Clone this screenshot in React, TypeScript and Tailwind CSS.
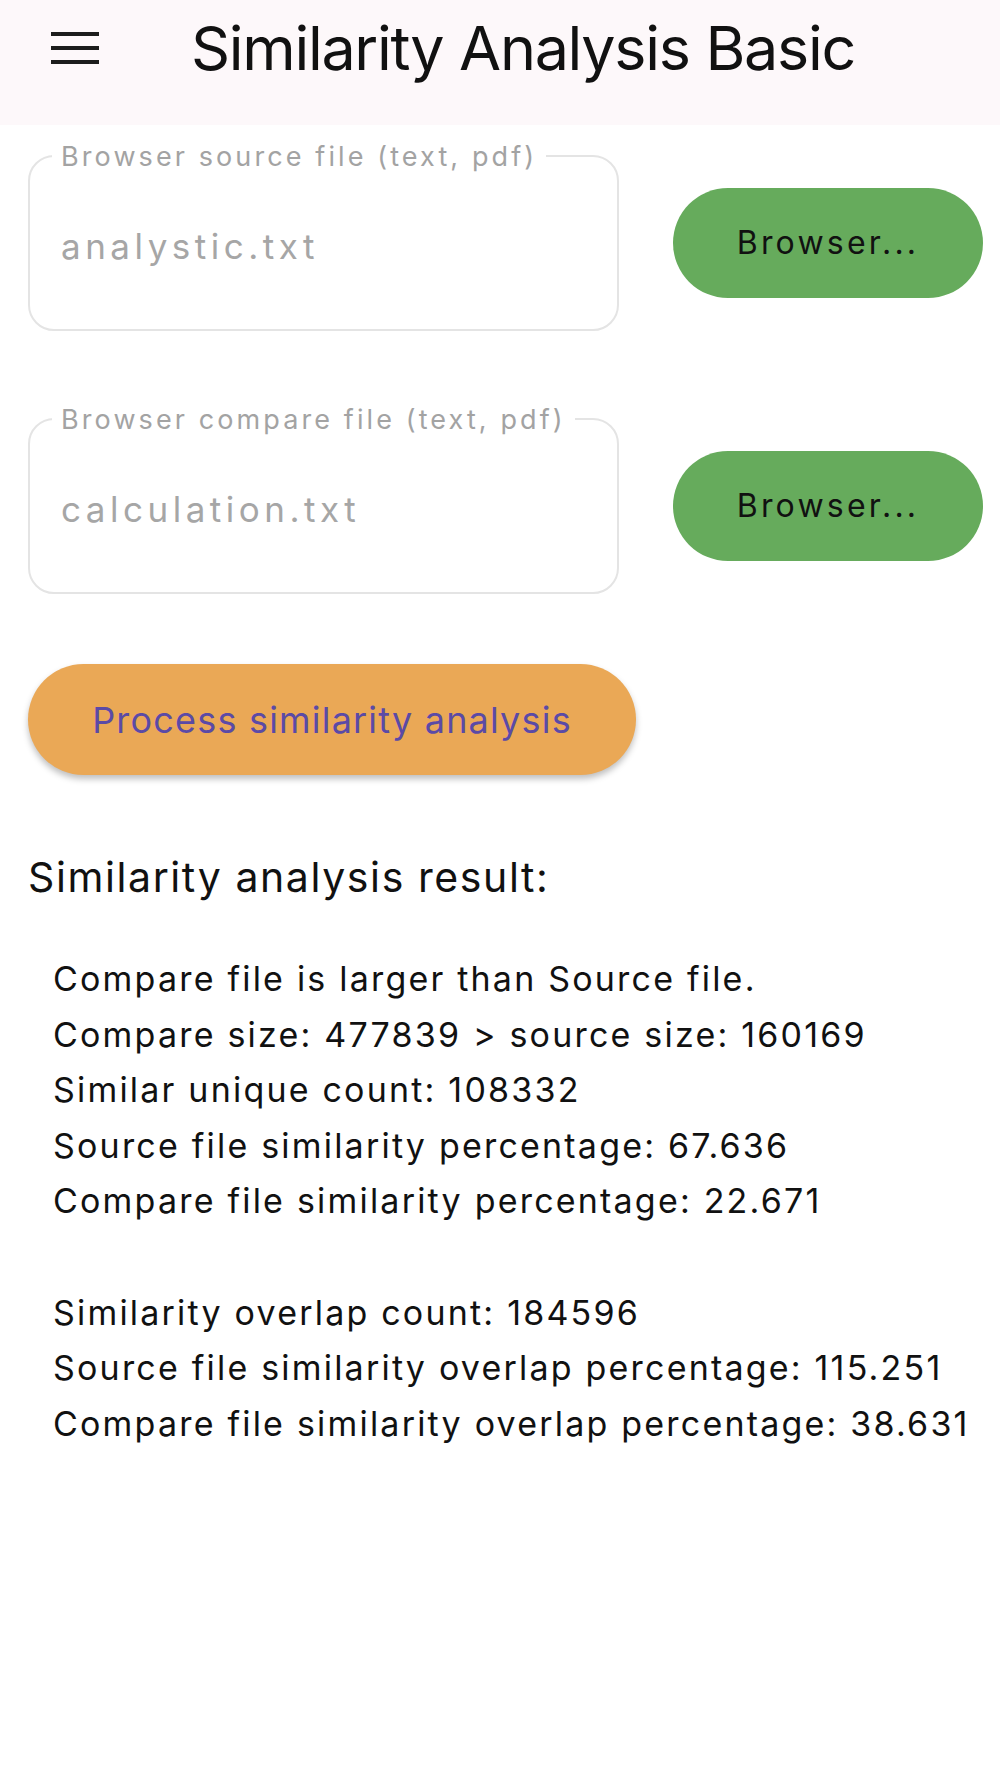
import React from 'react';

const font = { fontFamily: 'Inter, "Noto Sans", sans-serif' };

type FileFieldProps = {
  label: string;
  value: string;
};

function FileField({ label, value }: FileFieldProps) {
  return (
    <div className="relative flex h-[176px] w-[591px] items-center rounded-[26px] border-2 border-[#e4e4e4] bg-white pl-[31px] pt-[6px]">
      <span className="absolute left-[22px] top-0 -translate-y-1/2 bg-white px-[9px] text-[27px] leading-[32px] tracking-[3.1px] text-[#a3a3a3]">
        {label}
      </span>
      <span className="text-[35px] tracking-[4.5px] text-[#a6a6a6]">{value}</span>
    </div>
  );
}

function BrowseButton() {
  return (
    <button className="flex h-[110px] w-[310px] items-center justify-center rounded-full bg-[#66ab5c] text-[32px] tracking-[3.2px] text-[#111]">
      Browser...
    </button>
  );
}

const resultLines = [
  'Compare file is larger than Source file.',
  'Compare size: 477839 > source size: 160169',
  'Similar unique count: 108332',
  'Source file similarity percentage: 67.636',
  'Compare file similarity percentage: 22.671',
  '',
  'Similarity overlap count: 184596',
  'Source file similarity overlap percentage: 115.251',
  'Compare file similarity overlap percentage: 38.631',
];

export default function App() {
  return (
    <div className="min-h-[1778px] w-full bg-white text-[#111]" style={font}>
      {/* app bar */}
      <header className="h-[125px] bg-[#fdf8fa]">
        <div className="flex h-[96px] items-center">
          <svg className="ml-[51px] h-[32px] w-[48px]" viewBox="0 0 48 32" fill="#1c1c1c">
            <rect x="0" y="0" width="48" height="4" />
            <rect x="0" y="14" width="48" height="4" />
            <rect x="0" y="28" width="48" height="4" />
          </svg>
          <h1 className="ml-[92px] text-[61px] leading-none tracking-[-1.3px] text-[#111]">
            Similarity Analysis Basic
          </h1>
        </div>
      </header>

      <main className="pl-[28px] pr-[17px]">
        <div className="mt-[30px] flex items-center justify-between">
          <FileField label="Browser source file (text, pdf)" value="analystic.txt" />
          <BrowseButton />
        </div>
        <div className="mt-[87px] flex items-center justify-between">
          <FileField label="Browser compare file (text, pdf)" value="calculation.txt" />
          <BrowseButton />
        </div>

        <button className="mt-[70px] flex h-[111px] w-[608px] items-center justify-center rounded-full bg-[#eaa856] text-[36px] tracking-[1.2px] text-[#5b4aa6] shadow-[0_4px_6px_rgba(0,0,0,0.25)]">
          Process similarity analysis
        </button>

        <h2 className="mt-[78px] text-[41px] leading-[49px] tracking-[1.6px] text-[#111]">
          Similarity analysis result:
        </h2>

        <div className="mt-[49px] pl-[25px]">
          {resultLines.map((line, i) => (
            <p key={i} className="h-[55.6px] text-[34px] leading-[55.6px] tracking-[2.2px] text-[#111]">
              {line}
            </p>
          ))}
        </div>
      </main>
    </div>
  );
}
